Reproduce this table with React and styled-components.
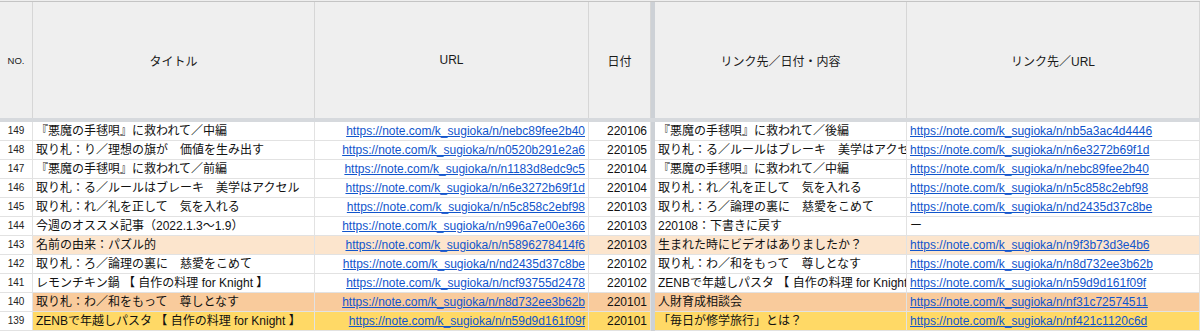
import React from 'react';
import styled, { createGlobalStyle } from 'styled-components';

const GlobalStyle = createGlobalStyle`
  html, body {
    margin: 0;
    padding: 0;
    background: #fff;
  }
  body {
    font-family: "Liberation Sans", "Noto Sans CJK JP", sans-serif;
    color: #111;
  }
`;

const COLS = '33px 282px 274px 62px 4px 252px 1fr';
const BASE = 'https://note.com/k_sugioka/n/';

const TONES = {
  peach: '#fce5cd',
  orange: '#f9cb9c',
  yellow: '#ffd966',
};

const rows = [
  { no: 149, title: '『悪魔の手毬唄』に救われて／中編', url: 'nebc89fee2b40', date: '220106', link: '『悪魔の手毬唄』に救われて／後編', linkUrl: 'nb5a3ac4d4446' },
  { no: 148, title: '取り札：り／理想の旗が　価値を生み出す', url: 'n0520b291e2a6', date: '220105', link: '取り札：る／ルールはブレーキ　美学はアクセル', linkUrl: 'n6e3272b69f1d' },
  { no: 147, title: '『悪魔の手毬唄』に救われて／前編', url: 'n1183d8edc9c5', date: '220104', link: '『悪魔の手毬唄』に救われて／中編', linkUrl: 'nebc89fee2b40' },
  { no: 146, title: '取り札：る／ルールはブレーキ　美学はアクセル', url: 'n6e3272b69f1d', date: '220104', link: '取り札：れ／礼を正して　気を入れる', linkUrl: 'n5c858c2ebf98' },
  { no: 145, title: '取り札：れ／礼を正して　気を入れる', url: 'n5c858c2ebf98', date: '220103', link: '取り札：ろ／論理の裏に　慈愛をこめて', linkUrl: 'nd2435d37c8be' },
  { no: 144, title: '今週のオススメ記事（2022.1.3〜1.9）', url: 'n996a7e00e366', date: '220103', link: '220108：下書きに戻す', linkUrl: null },
  { no: 143, title: '名前の由来：パズル的', url: 'n5896278414f6', date: '220103', link: '生まれた時にビデオはありましたか？', linkUrl: 'n9f3b73d3e4b6', tone: 'peach' },
  { no: 142, title: '取り札：ろ／論理の裏に　慈愛をこめて', url: 'nd2435d37c8be', date: '220102', link: '取り札：わ／和をもって　尊しとなす', linkUrl: 'n8d732ee3b62b' },
  { no: 141, title: 'レモンチキン鍋 【 自作の料理 for Knight 】', url: 'ncf93755d2478', date: '220102', link: 'ZENBで年越しパスタ 【 自作の料理 for Knight 】', linkUrl: 'n59d9d161f09f' },
  { no: 140, title: '取り札：わ／和をもって　尊しとなす', url: 'n8d732ee3b62b', date: '220101', link: '人財育成相談会', linkUrl: 'nf31c72574511', tone: 'orange' },
  { no: 139, title: 'ZENBで年越しパスタ 【 自作の料理 for Knight 】', url: 'n59d9d161f09f', date: '220101', link: '「毎日が修学旅行」とは？', linkUrl: 'nf421c1120c6d', tone: 'yellow' },
];

const Sheet = styled.div`
  width: 1200px;
  height: 332px;
  overflow: hidden;
  background: #fff;
`;

const TopStrip = styled.div`
  height: 1px;
  background: #eeeeee;
  border-bottom: 1px solid #c4c4c4;
`;

const Row = styled.div`
  display: grid;
  grid-template-columns: ${COLS};
  height: ${p => p.$h}px;
`;

const HeadCell = styled.div`
  box-sizing: border-box;
  display: flex;
  align-items: center;
  justify-content: center;
  background: #efefef;
  border-right: 1px solid #d6d6d6;
  font-size: ${p => (p.$small ? '9.5px' : '12px')};
  color: #1a1a1a;
  white-space: nowrap;
`;

const Freeze = styled.div`
  background: #cdd1d6;
`;

const FreezeBand = styled.div`
  height: 4px;
  background: #d6d9dd;
`;

const Cell = styled.div`
  box-sizing: border-box;
  height: 19px;
  padding: 0 3px;
  border-right: 1px solid #e2e2e2;
  border-bottom: 1px solid #e2e2e2;
  background: ${p => p.$bg || '#fff'};
  text-align: ${p => p.$align || 'left'};
  font-size: 12px;
  line-height: 18px;
  white-space: nowrap;
  overflow: hidden;
  color: #111;
`;

const NoCell = styled(Cell)`
  text-align: center;
  font-size: 10px;
  color: #222;
  padding: 0;
`;

const Link = styled.a`
  color: #1155cc;
  text-decoration: underline;
  text-underline-offset: 1px;
`;

const DataRow = ({ r }) => {
  const bg = r.tone ? TONES[r.tone] : null;
  return (
    <Row $h={19}>
      <NoCell>{r.no}</NoCell>
      <Cell $bg={bg}>{r.title}</Cell>
      <Cell $bg={bg} $align="right">
        <Link href="#">{BASE + r.url}</Link>
      </Cell>
      <Cell $bg={bg} $align="right">{r.date}</Cell>
      <Freeze />
      <Cell $bg={bg}>{r.link}</Cell>
      <Cell $bg={bg}>
        {r.linkUrl ? <Link href="#">{BASE + r.linkUrl}</Link> : 'ー'}
      </Cell>
    </Row>
  );
};

const App = () => {
  return (
    <>
      <GlobalStyle />
      <Sheet>
        <TopStrip />
        <Row $h={116}>
          <HeadCell $small>NO.</HeadCell>
          <HeadCell>タイトル</HeadCell>
          <HeadCell>URL</HeadCell>
          <HeadCell>日付</HeadCell>
          <Freeze />
          <HeadCell>リンク先／日付・内容</HeadCell>
          <HeadCell>リンク先／URL</HeadCell>
        </Row>
        <FreezeBand />
        {rows.map(r => (
          <DataRow key={r.no} r={r} />
        ))}
      </Sheet>
    </>
  );
};

export default App;
